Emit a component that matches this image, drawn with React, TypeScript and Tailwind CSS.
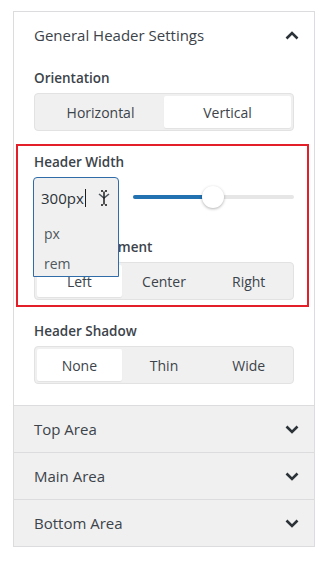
import React from "react";

const font = { fontFamily: '"Open Sans", "Noto Sans", sans-serif' };

function Chevron({ up = false }: { up?: boolean }) {
  return (
    <svg width="14" height="9" viewBox="0 0 14 9" className="text-[#2c3338]">
      <path
        d={up ? "M1.5 7.5 L7 2 L12.5 7.5" : "M1.5 1.5 L7 7 L12.5 1.5"}
        fill="none"
        stroke="currentColor"
        strokeWidth="2.6"
      />
    </svg>
  );
}

function Segmented({ options, active }: { options: string[]; active: number }) {
  return (
    <div className="flex h-[38px] rounded-[4px] border border-[#e2e2e2] bg-[#f0f0f0] p-[2px]">
      {options.map((o, i) => (
        <div
          key={o}
          className={
            "flex flex-1 items-center justify-center text-[14px] text-[#3c434a] " +
            (i === active ? "rounded-[2px] bg-white shadow-[0_1px_1px_rgba(0,0,0,0.06)]" : "")
          }
        >
          {o}
        </div>
      ))}
    </div>
  );
}

function Label({ children }: { children: React.ReactNode }) {
  return (
    <div className="h-[20px] text-[13.5px] font-semibold leading-[20px] text-[#3c434a]">
      {children}
    </div>
  );
}

function AreaRow({ title }: { title: string }) {
  return (
    <div className="flex h-[47px] items-center justify-between border-t border-[#dcdcde] bg-[#f0f0f0] pl-[20px] pr-[15px]">
      <span className="text-[15px] text-[#3c434a]">{title}</span>
      <Chevron />
    </div>
  );
}

export default function App() {
  return (
    <div className="min-h-[588px] bg-white pt-[11px]" style={font}>
      <div className="ml-[13px] w-[302px] border border-[#dcdcde] bg-white">
        <div className="flex h-[47px] items-center justify-between pl-[20px] pr-[15px]">
          <span className="text-[15px] text-[#3c434a]">General Header Settings</span>
          <Chevron up />
        </div>

        <div className="px-[20px] pt-[9px] pb-[21px]">
          <Label>Orientation</Label>
          <div className="mt-[5px]">
            <Segmented options={["Horizontal", "Vertical"]} active={1} />
          </div>

          <div className="mt-[13px] -ml-[18px] -mr-[15px] border-2 border-[#e3202a] pl-[16px] pr-[13px] pt-[6px] pb-[5px]">
            <Label>Header Width</Label>
            <div className="relative mt-[5px] flex h-[40px] items-center">
              <div className="w-[86px] shrink-0" />
              <div className="relative ml-[13px] h-[22px] flex-1">
                <div className="absolute left-0 right-0 top-[9px] h-[4px] rounded-full bg-[#e6e6e6]" />
                <div className="absolute left-0 top-[9px] h-[4px] w-[80px] rounded-l-full bg-[#2271b1]" />
                <div className="absolute left-[69px] top-0 h-[22px] w-[22px] rounded-full bg-white shadow-[0_1px_3px_rgba(0,0,0,0.3)]" />
              </div>

              {/* open unit dropdown */}
              <div className="absolute -left-[1px] top-0 z-10 h-[100px] w-[86px] rounded-t-[4px] border-[1.5px] border-[#2f6ca8] bg-[#f0f0f0]">
                <div className="flex h-[40px] items-center justify-between pl-[7px] pr-[6px]">
                  <span className="flex items-center text-[15px] text-[#2c3338]">
                    300px
                    <span className="ml-[1px] inline-block h-[18px] w-[1px] bg-[#1e1e1e]" />
                  </span>
                  <svg width="14" height="20" viewBox="0 0 14 20" className="mr-[1px]">
                    <path d="M2 6 L7 10 L12 6" fill="none" stroke="#50575e" strokeWidth="1.6" />
                    <path
                      d="M4 3 H6 M8 3 H10 M7 3.5 V16.5 M4 17 H6 M8 17 H10"
                      fill="none"
                      stroke="#111"
                      strokeWidth="1.4"
                    />
                  </svg>
                </div>
                <div className="flex h-[30px] items-center pl-[10px] text-[14px] text-[#50575e]">px</div>
                <div className="flex h-[30px] items-center pl-[10px] text-[14px] text-[#50575e]">rem</div>
              </div>
            </div>

            <div className="mt-[20px]">
              <Label>Header Alignment</Label>
            </div>
            <div className="mt-[5px]">
              <Segmented options={["Left", "Center", "Right"]} active={0} />
            </div>
          </div>

          <div className="mt-[14px]">
            <Label>Header Shadow</Label>
          </div>
          <div className="mt-[5px]">
            <Segmented options={["None", "Thin", "Wide"]} active={0} />
          </div>
        </div>

        <AreaRow title="Top Area" />
        <AreaRow title="Main Area" />
        <AreaRow title="Bottom Area" />
      </div>
    </div>
  );
}
